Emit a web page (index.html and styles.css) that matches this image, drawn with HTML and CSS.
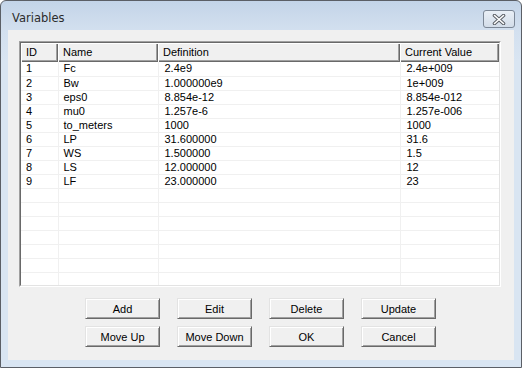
FILE: index.html
```html
<!DOCTYPE html>
<html lang="en">
<head>
    <meta charset="UTF-8">
    <title>Variables</title>
    <link rel="stylesheet" href="styles.css">
</head>
<body>
    <div class="window">
        <div class="titlebar">
            <span class="title">Variables</span>
            <div class="close">
                <svg width="14" height="11" viewBox="0 0 14 11">
                    <path d="M2.5 1.5 L11.5 9.5 M11.5 1.5 L2.5 9.5" stroke="#5a5f66" stroke-width="3.6" stroke-linecap="round"/>
                    <path d="M2.5 1.5 L11.5 9.5 M11.5 1.5 L2.5 9.5" stroke="#fff" stroke-width="1.6" stroke-linecap="round"/>
                </svg>
            </div>
        </div>
        <div class="client">
            <div class="list">
                <div class="list-inner">
                    <table class="grid">
                        <colgroup>
                            <col class="c-id">
                            <col class="c-name">
                            <col class="c-def">
                            <col class="c-val">
                        </colgroup>
                        <thead>
                            <tr><th>ID</th><th>Name</th><th>Definition</th><th>Current Value</th></tr>
                        </thead>
                        <tbody>
                            <tr><td>1</td><td>Fc</td><td>2.4e9</td><td>2.4e+009</td></tr>
                            <tr><td>2</td><td>Bw</td><td>1.000000e9</td><td>1e+009</td></tr>
                            <tr><td>3</td><td>eps0</td><td>8.854e-12</td><td>8.854e-012</td></tr>
                            <tr><td>4</td><td>mu0</td><td>1.257e-6</td><td>1.257e-006</td></tr>
                            <tr><td>5</td><td>to_meters</td><td>1000</td><td>1000</td></tr>
                            <tr><td>6</td><td>LP</td><td>31.600000</td><td>31.6</td></tr>
                            <tr><td>7</td><td>WS</td><td>1.500000</td><td>1.5</td></tr>
                            <tr><td>8</td><td>LS</td><td>12.000000</td><td>12</td></tr>
                            <tr><td>9</td><td>LF</td><td>23.000000</td><td>23</td></tr>
                            <tr><td></td><td></td><td></td><td></td></tr>
                            <tr><td></td><td></td><td></td><td></td></tr>
                            <tr><td></td><td></td><td></td><td></td></tr>
                            <tr><td></td><td></td><td></td><td></td></tr>
                            <tr><td></td><td></td><td></td><td></td></tr>
                            <tr><td></td><td></td><td></td><td></td></tr>
                            <tr><td></td><td></td><td></td><td></td></tr>
                            <tr><td></td><td></td><td></td><td></td></tr>
                        </tbody>
                    </table>
                </div>
            </div>
            <div class="buttons">
                <button class="btn">Add</button>
                <button class="btn">Edit</button>
                <button class="btn">Delete</button>
                <button class="btn">Update</button>
                <button class="btn">Move Up</button>
                <button class="btn">Move Down</button>
                <button class="btn">OK</button>
                <button class="btn">Cancel</button>
            </div>
        </div>
    </div>
</body>
</html>
```

FILE: styles.css
```css
html,body{
    width: 100%;
    height: 100%;
    margin: 0;
    background-color: #fff;
}
.window{
    box-sizing: border-box;
    width: 522px;
    height: 368px;
    padding: 0 7px 7px 7px;
    border: 1px solid #5b5f66;
    border-radius: 6px 6px 0 0;
    background-image: linear-gradient(180deg,#c3d4e8 0,#d3e0ef 30px,#d9e5f2 60px,#d9e5f2 100%);
    font-family: "Liberation Sans", Arial, sans-serif;
}
.titlebar{
    display: flex;
    align-items: flex-start;
    justify-content: space-between;
    height: 29px;
}
.title{
    margin: 10px 0 0 4px;
    font-family: "DejaVu Sans", sans-serif;
    font-size: 11.5px;
    color: #2b2b2b;
}
.close{
    display: flex;
    align-items: center;
    justify-content: center;
    box-sizing: border-box;
    width: 32px;
    height: 18px;
    margin: 9px -1px 0 0;
    border: 1px solid #7c8796;
    border-radius: 3px;
    background-image: linear-gradient(180deg,#e9eff6,#d3dde9);
}
.client{
    box-sizing: border-box;
    height: 330px;
    padding: 11px 0 0 11px;
    background-color: #f0f0f0;
}
.list{
    box-sizing: border-box;
    width: 482px;
    height: 246px;
    border: 1px solid;
    border-color: #a0a0a0 #fff #fff #a0a0a0;
}
.list-inner{
    box-sizing: border-box;
    height: 100%;
    overflow: hidden;
    border: 1px solid;
    border-color: #696969 #e3e3e3 #e3e3e3 #696969;
    background-color: #fff;
}
.grid{
    table-layout: fixed;
    width: 478px;
    border-collapse: collapse;
    font-size: 11px;
    color: #000;
}
.c-id{ width: 37px; }
.c-name{ width: 100px; }
.c-def{ width: 242px; }
.c-val{ width: 99px; }
.grid th{
    box-sizing: border-box;
    height: 19px;
    padding: 0 0 1px 5px;
    text-align: left;
    font-weight: normal;
    white-space: nowrap;
    background-color: #f0f0f0;
    box-shadow: inset 1px 1px #fff, inset -1px -1px #696969, inset -2px -2px #a0a0a0;
}
.grid td{
    box-sizing: border-box;
    height: 14px;
    padding: 0 0 0 5px;
    line-height: 13px;
    white-space: nowrap;
    border-right: 1px solid #f0f0f0;
    border-bottom: 1px solid #f0f0f0;
}
.grid td:last-child{
    border-right: 0;
}
.grid td:nth-child(3),
.grid td:nth-child(4){
    padding-left: 6px;
}
.buttons{
    display: grid;
    grid-template-columns: repeat(4, 75px);
    column-gap: 17px;
    row-gap: 7px;
    margin: 11px 0 0 66px;
}
.btn{
    box-sizing: border-box;
    height: 21px;
    padding: 0;
    border: 1px solid;
    border-color: #e3e3e3 #696969 #696969 #e3e3e3;
    background-color: #f0f0f0;
    box-shadow: inset 1px 1px #fff, inset -1px -1px #a0a0a0;
    font-family: "Liberation Sans", Arial, sans-serif;
    font-size: 11px;
    color: #000;
    white-space: nowrap;
}
```
